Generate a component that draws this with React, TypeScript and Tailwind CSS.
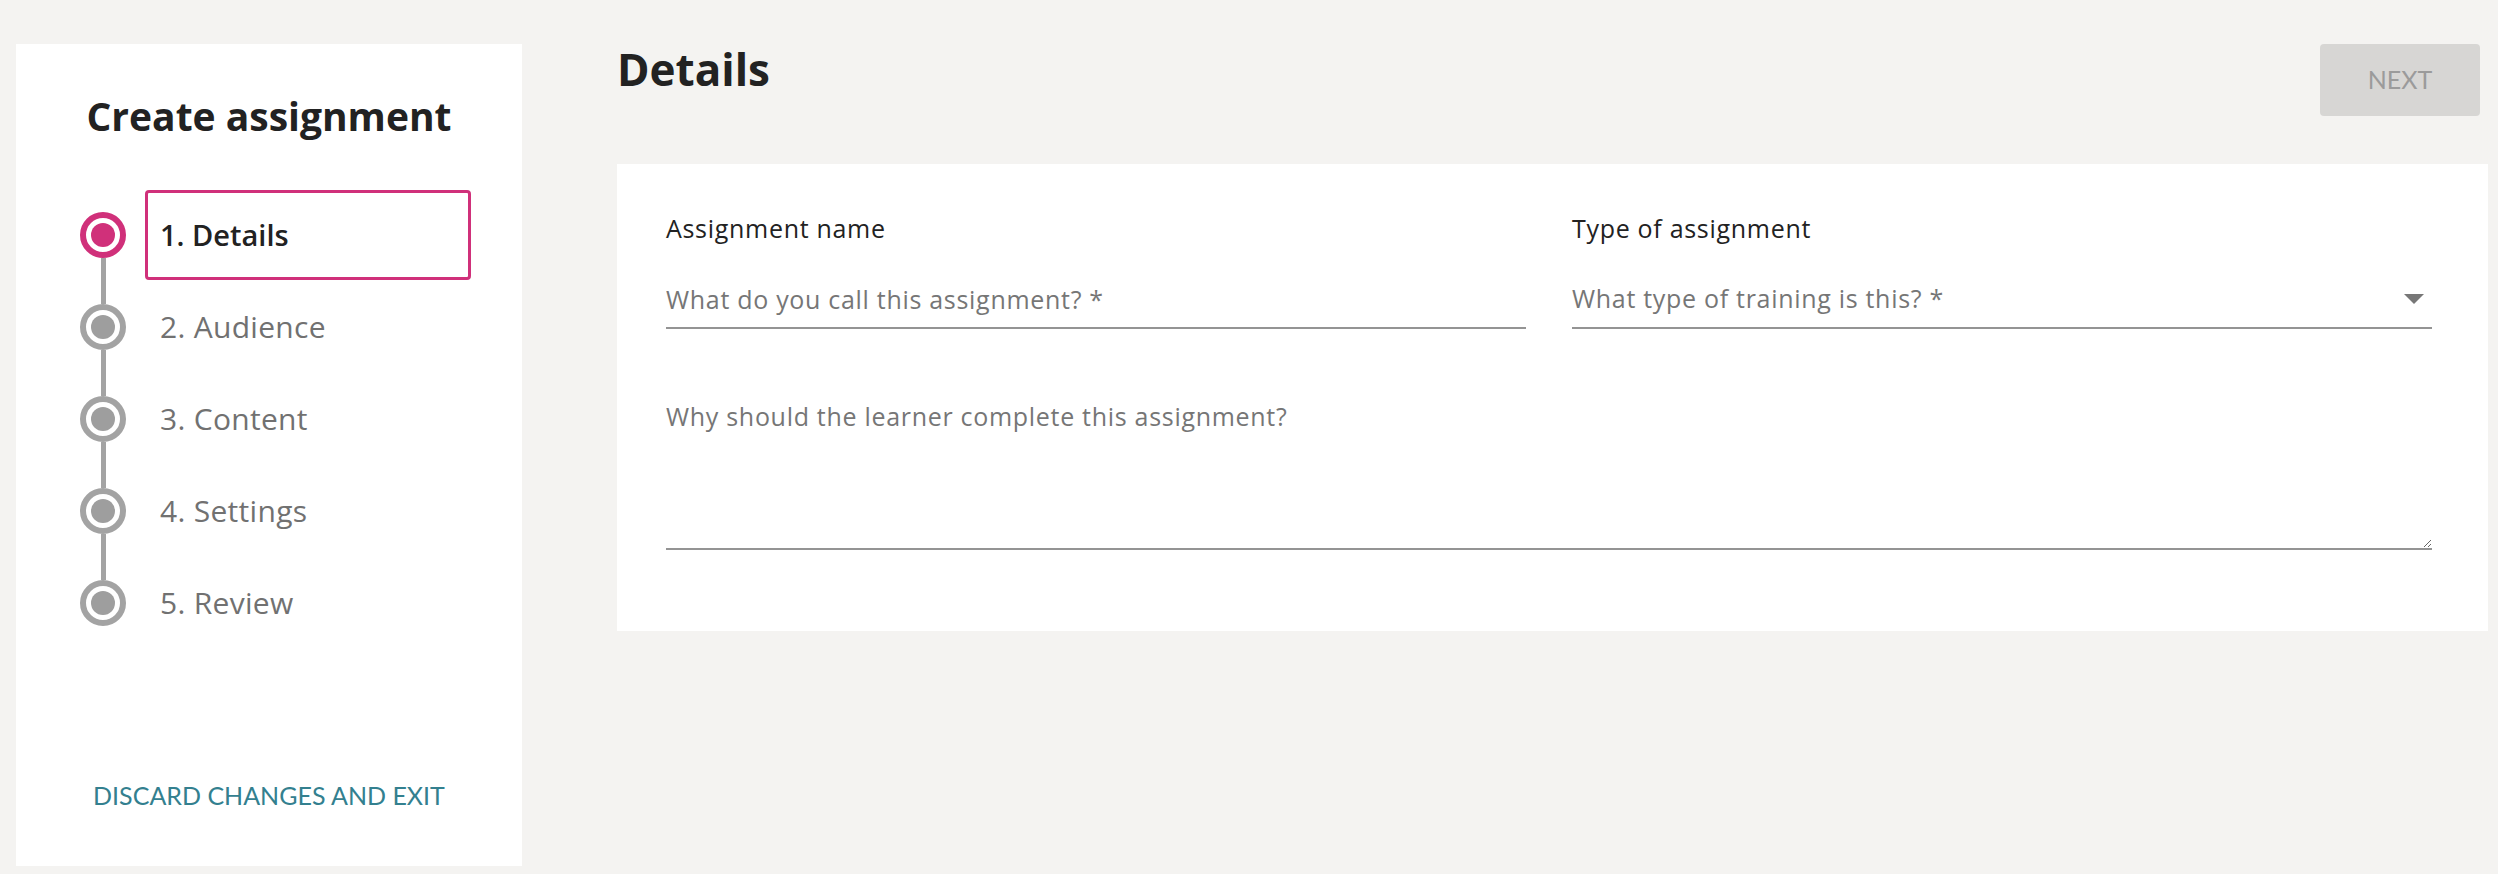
import React from 'react';

const steps = ['1. Details', '2. Audience', '3. Content', '4. Settings', '5. Review'];

const StepDot: React.FC<{ active: boolean }> = ({ active }) => (
  <div
    className={`flex h-[46px] w-[46px] shrink-0 items-center justify-center rounded-full border-[6px] bg-white ${
      active ? 'border-[#d0307a]' : 'border-[#a3a3a3]'
    }`}
  >
    <div className={`h-[24px] w-[24px] rounded-full ${active ? 'bg-[#d0307a]' : 'bg-[#9e9e9e]'}`} />
  </div>
);

const Sidebar: React.FC = () => {
  return (
    <aside className="flex h-[822px] w-[506px] shrink-0 flex-col bg-white pb-[56px] pt-[49px]">
      <h2 className="text-center text-[39px] font-bold leading-[1.2] text-[#222]">Create assignment</h2>
      <ol className="ml-[64px] mt-[72px] flex flex-col">
        {steps.map((label, i) => {
          const active = i === 0;
          const last = i === steps.length - 1;
          return (
            <li className="flex" key={label}>
              <div className="flex w-[46px] flex-col items-center">
                <StepDot active={active} />
                {!last && <div className="h-[46px] w-[5px] bg-[#a3a3a3]" />}
              </div>
              <div className="ml-[19px] flex h-[46px] items-center">
                <div
                  className={`flex h-[90px] w-[326px] items-center rounded-[4px] border-[3px] px-[12px] ${
                    active
                      ? 'border-[#d0307a] text-[29px] font-semibold text-[#222]'
                      : 'border-transparent text-[30px] tracking-[0.3px] text-[#717171]'
                  }`}
                >
                  {label}
                </div>
              </div>
            </li>
          );
        })}
      </ol>
      <button
        className="mt-auto self-center text-[25px] uppercase leading-[1.2] text-[#33808f]"
        style={{ fontFamily: 'Lato, sans-serif' }}
      >
        Discard changes and exit
      </button>
    </aside>
  );
};

const DetailsForm: React.FC = () => {
  return (
    <section className="mt-[48px] bg-white pb-[81px] pl-[49px] pr-[56px] pt-[49px] text-[25px] tracking-[0.7px]">
      <div className="grid grid-cols-2 gap-x-[46px]">
        <div>
          <label className="block leading-[1.2] text-[#222]">Assignment name</label>
          <input
            className="mt-[28px] h-[58px] w-full border-b-2 border-[#949494] text-[#222] outline-none placeholder:text-[#767676]"
            placeholder="What do you call this assignment? *"
            type="text"
          />
        </div>
        <div>
          <label className="block leading-[1.2] text-[#222]">Type of assignment</label>
          <div className="mt-[28px] flex h-[58px] w-full items-center justify-between border-b-2 border-[#949494] text-[#767676]">
            <span>What type of training is this? *</span>
            <svg className="mr-[8px]" height="10" viewBox="0 0 20 10" width="20">
              <path d="M0 0h20L10 10z" fill="#777" />
            </svg>
          </div>
        </div>
        <textarea
          className="col-span-2 mt-[60px] h-[161px] w-full border-b-2 border-[#949494] pt-[12px] leading-[1.2] text-[#222] outline-none placeholder:text-[#767676]"
          placeholder="Why should the learner complete this assignment?"
        />
      </div>
    </section>
  );
};

const App: React.FC = () => {
  return (
    <div
      className="flex h-[874px] bg-[#f4f3f1] pb-[8px] pl-[16px] pr-[10px] pt-[44px]"
      style={{ fontFamily: '"Open Sans", Lato, sans-serif' }}
    >
      <Sidebar />
      <main className="ml-[95px] flex-1">
        <div className="flex items-start justify-between">
          <h1 className="-mt-[1px] text-[44px] font-bold leading-[1.2] text-[#222]">Details</h1>
          <button
            className="mr-[8px] h-[72px] w-[160px] rounded-[4px] bg-[#d7d6d4] text-[25px] uppercase text-[#9b9b9b]"
            disabled
            style={{ fontFamily: 'Lato, sans-serif' }}
          >
            Next
          </button>
        </div>
        <DetailsForm />
      </main>
    </div>
  );
};

export default App;
